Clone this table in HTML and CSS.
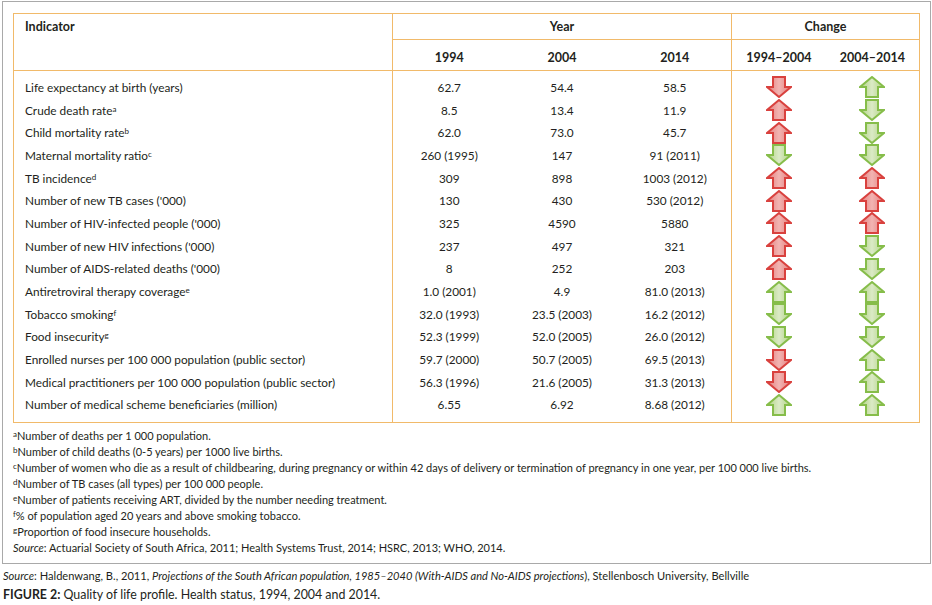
FILE: index.html
```html
<!DOCTYPE html>
<html>
<head>
<meta charset="utf-8">
<link rel="stylesheet" href="styles.css">
</head>
<body>
<svg class="defs" width="0" height="0" aria-hidden="true">
  <defs>
    <linearGradient id="gr" x1="0" y1="0" x2="1" y2="0">
      <stop offset="0" stop-color="#e47c7a"/>
      <stop offset="0.5" stop-color="#f2b4b2"/>
      <stop offset="1" stop-color="#e47c7a"/>
    </linearGradient>
    <linearGradient id="gg" x1="0" y1="0" x2="1" y2="0">
      <stop offset="0" stop-color="#afd27f"/>
      <stop offset="0.5" stop-color="#dbeac6"/>
      <stop offset="1" stop-color="#afd27f"/>
    </linearGradient>
    <symbol id="ru" viewBox="0 0 26 22"><path d="M13 1 L25 11 L19 11 L19 21 L7 21 L7 11 L1 11 Z" fill="url(#gr)" stroke="#d9413e" stroke-width="2"/></symbol>
    <symbol id="rd" viewBox="0 0 26 22"><path d="M13 21 L25 11 L19 11 L19 1 L7 1 L7 11 L1 11 Z" fill="url(#gr)" stroke="#d9413e" stroke-width="2"/></symbol>
    <symbol id="gu" viewBox="0 0 26 22"><path d="M13 1 L25 11 L19 11 L19 21 L7 21 L7 11 L1 11 Z" fill="url(#gg)" stroke="#86bd4a" stroke-width="2"/></symbol>
    <symbol id="gd" viewBox="0 0 26 22"><path d="M13 21 L25 11 L19 11 L19 1 L7 1 L7 11 L1 11 Z" fill="url(#gg)" stroke="#86bd4a" stroke-width="2"/></symbol>
  </defs>
</svg>
<div class="figure">
  <table class="data">
    <colgroup>
      <col class="c-ind"><col class="c-yr"><col class="c-yr"><col class="c-yr"><col class="c-ch"><col class="c-ch">
    </colgroup>
    <thead>
      <tr class="h1">
        <th class="ind" rowspan="2">Indicator</th>
        <th class="grp yr-grp" colspan="3">Year</th>
        <th class="grp" colspan="2">Change</th>
      </tr>
      <tr class="h2">
        <th>1994</th><th>2004</th><th class="last-yr">2014</th>
        <th>1994–2004</th><th>2004–2014</th>
      </tr>
    </thead>
    <tbody>
      <tr class="first"><td class="ind">Life expectancy at birth (years)</td><td>62.7</td><td>54.4</td><td class="last-yr">58.5</td><td><svg class="arr"><use href="#rd"/></svg></td><td><svg class="arr"><use href="#gu"/></svg></td></tr>
      <tr><td class="ind">Crude death rate<sup>a</sup></td><td>8.5</td><td>13.4</td><td class="last-yr">11.9</td><td><svg class="arr"><use href="#ru"/></svg></td><td><svg class="arr"><use href="#gd"/></svg></td></tr>
      <tr><td class="ind">Child mortality rate<sup>b</sup></td><td>62.0</td><td>73.0</td><td class="last-yr">45.7</td><td><svg class="arr"><use href="#ru"/></svg></td><td><svg class="arr"><use href="#gd"/></svg></td></tr>
      <tr><td class="ind">Maternal mortality ratio<sup>c</sup></td><td>260 (1995)</td><td>147</td><td class="last-yr">91 (2011)</td><td><svg class="arr"><use href="#gd"/></svg></td><td><svg class="arr"><use href="#gd"/></svg></td></tr>
      <tr><td class="ind">TB incidence<sup>d</sup></td><td>309</td><td>898</td><td class="last-yr">1003 (2012)</td><td><svg class="arr"><use href="#ru"/></svg></td><td><svg class="arr"><use href="#ru"/></svg></td></tr>
      <tr><td class="ind">Number of new TB cases ('000)</td><td>130</td><td>430</td><td class="last-yr">530 (2012)</td><td><svg class="arr"><use href="#ru"/></svg></td><td><svg class="arr"><use href="#ru"/></svg></td></tr>
      <tr><td class="ind">Number of HIV-infected people ('000)</td><td>325</td><td>4590</td><td class="last-yr">5880</td><td><svg class="arr"><use href="#ru"/></svg></td><td><svg class="arr"><use href="#ru"/></svg></td></tr>
      <tr><td class="ind">Number of new HIV infections ('000)</td><td>237</td><td>497</td><td class="last-yr">321</td><td><svg class="arr"><use href="#ru"/></svg></td><td><svg class="arr"><use href="#gd"/></svg></td></tr>
      <tr><td class="ind">Number of AIDS-related deaths ('000)</td><td>8</td><td>252</td><td class="last-yr">203</td><td><svg class="arr"><use href="#ru"/></svg></td><td><svg class="arr"><use href="#gd"/></svg></td></tr>
      <tr><td class="ind">Antiretroviral therapy coverage<sup>e</sup></td><td>1.0 (2001)</td><td>4.9</td><td class="last-yr">81.0 (2013)</td><td><svg class="arr"><use href="#gu"/></svg></td><td><svg class="arr"><use href="#gu"/></svg></td></tr>
      <tr><td class="ind">Tobacco smoking<sup>f</sup></td><td>32.0 (1993)</td><td>23.5 (2003)</td><td class="last-yr">16.2 (2012)</td><td><svg class="arr"><use href="#gd"/></svg></td><td><svg class="arr"><use href="#gd"/></svg></td></tr>
      <tr><td class="ind">Food insecurity<sup>g</sup></td><td>52.3 (1999)</td><td>52.0 (2005)</td><td class="last-yr">26.0 (2012)</td><td><svg class="arr"><use href="#gd"/></svg></td><td><svg class="arr"><use href="#gd"/></svg></td></tr>
      <tr><td class="ind">Enrolled nurses per 100 000 population (public sector)</td><td>59.7 (2000)</td><td>50.7 (2005)</td><td class="last-yr">69.5 (2013)</td><td><svg class="arr"><use href="#rd"/></svg></td><td><svg class="arr"><use href="#gu"/></svg></td></tr>
      <tr><td class="ind">Medical practitioners per 100 000 population (public sector)</td><td>56.3 (1996)</td><td>21.6 (2005)</td><td class="last-yr">31.3 (2013)</td><td><svg class="arr"><use href="#rd"/></svg></td><td><svg class="arr"><use href="#gu"/></svg></td></tr>
      <tr class="last"><td class="ind">Number of medical scheme beneficiaries (million)</td><td>6.55</td><td>6.92</td><td class="last-yr">8.68 (2012)</td><td><svg class="arr"><use href="#gu"/></svg></td><td><svg class="arr"><use href="#gu"/></svg></td></tr>
    </tbody>
  </table>
  <div class="notes">
    <p><sup>a</sup>Number of deaths per 1 000 population.</p>
    <p><sup>b</sup>Number of child deaths (0-5 years) per 1000 live births.</p>
    <p><sup>c</sup>Number of women who die as a result of childbearing, during pregnancy or within 42 days of delivery or termination of pregnancy in one year, per 100 000 live births.</p>
    <p><sup>d</sup>Number of TB cases (all types) per 100 000 people.</p>
    <p><sup>e</sup>Number of patients receiving ART, divided by the number needing treatment.</p>
    <p><sup>f</sup>% of population aged 20 years and above smoking tobacco.</p>
    <p><sup>g</sup>Proportion of food insecure households.</p>
    <p><em>Source</em>: Actuarial Society of South Africa, 2011; Health Systems Trust, 2014; HSRC, 2013; WHO, 2014.</p>
  </div>
</div>
<p class="src"><em>Source</em>: Haldenwang, B., 2011, <em>Projections of the South African population, 1985–2040 (With-AIDS and No-AIDS projections</em>), Stellenbosch University, Bellville</p>
<p class="caption"><strong>FIGURE 2:</strong> Quality of life profile. Health status, 1994, 2004 and 2014.</p>
</body>
</html>
```

FILE: styles.css
```css
html, body {
  margin: 0;
  padding: 0;
  background: #ffffff;
}
body {
  font-family: Lato, "Liberation Sans", sans-serif;
  color: #231f20;
  width: 932px;
}
.defs {
  position: absolute;
  width: 0;
  height: 0;
  overflow: hidden;
}
.figure {
  box-sizing: border-box;
  width: 929px;
  margin: 1px 0 0 2px;
  border: 1px solid #a9a9a9;
  padding: 11px 10px 7px 10px;
}
.data {
  border-collapse: collapse;
  table-layout: fixed;
  width: 907px;
  border: 1px solid #f1ba6a;
  font-size: 11.8px;
}
.c-ind { width: 379px; }
.c-yr { width: 113px; }
.c-ch { width: 94px; }
.data th {
  font-weight: 700;
  font-size: 12.5px;
  text-align: center;
  padding: 0;
}
.data th.ind {
  text-align: left;
  vertical-align: top;
  padding: 5px 0 0 11px;
  border-bottom: 1px solid #f1ba6a;
  border-right: 1px solid #f1ba6a;
}
.h1 { height: 26px; }
.h1 .grp {
  border-bottom: 1px solid #f1ba6a;
  vertical-align: middle;
  padding-bottom: 1px;
}
.h1 .yr-grp { border-right: 1px solid #f1ba6a; }
.h2 { height: 31px; }
.h2 th {
  vertical-align: middle;
  padding-top: 4px;
  border-bottom: 1px solid #f1ba6a;
}
.data td {
  padding: 0;
  text-align: center;
  vertical-align: middle;
  height: 22.7px;
  white-space: nowrap;
}
.data td.ind {
  text-align: left;
  padding-left: 11px;
  border-right: 1px solid #f1ba6a;
}
.data .last-yr { border-right: 1px solid #f1ba6a; }
.data tr.first td { padding-top: 5px; }
.data tr.last td { padding-bottom: 6px; }
.arr {
  display: block;
  width: 26px;
  height: 22px;
  margin: 0 auto;
  overflow: visible;
}
sup {
  font-size: 8px;
  line-height: 0;
  vertical-align: 3px;
}
.notes {
  margin-top: 5px;
  font-size: 11px;
  line-height: 16px;
}
.notes p {
  margin: 0;
  white-space: nowrap;
}
.src {
  margin: 4px 0 0 3px;
  font-size: 11.1px;
  line-height: 16px;
  white-space: nowrap;
}
.caption {
  margin: 2px 0 0 3px;
  font-size: 12.4px;
  line-height: 18px;
  white-space: nowrap;
}
.caption strong { font-weight: 700; }
```
